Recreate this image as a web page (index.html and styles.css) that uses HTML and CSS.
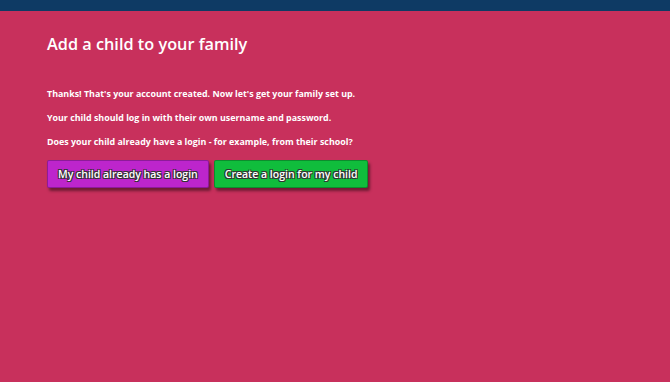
FILE: index.html
```html
<!DOCTYPE html>
<html>
<head>
  <meta charset="UTF-8">
  <title>Add a child to your family</title>
  <link rel="stylesheet" href="styles.css">
</head>
<body>
  <div class="topbar"></div>
  <div class="content">
    <h1>Add a child to your family</h1>
    <p>Thanks! That's your account created. Now let's get your family set up.</p>
    <p>Your child should log in with their own username and password.</p>
    <p>Does your child already have a login - for example, from their school?</p>
    <div class="actions">
      <button class="btn btn-purple">My child already has a login</button>
      <button class="btn btn-green">Create a login for my child</button>
    </div>
  </div>
</body>
</html>
```

FILE: styles.css
```css
html, body {
  height: 100%;
}
body {
  margin: 0;
  background: #c8305c;
  font-family: "Open Sans", sans-serif;
  color: #fff;
}
.topbar {
  height: 11px;
  background: #0e3a64;
}
.content {
  padding: 22px 47px;
}
h1 {
  margin: 0 0 33px;
  font-size: 16.3px;
  font-weight: 600;
  line-height: 22px;
}
p {
  margin: 0 0 12px;
  font-size: 8.9px;
  font-weight: 700;
  line-height: 12px;
}
.actions {
  display: flex;
  gap: 5px;
  margin-top: 7px;
}
.btn {
  height: 28px;
  padding: 0 10px;
  border: 1px solid rgba(0, 0, 0, 0.25);
  border-radius: 2px;
  font-family: "Open Sans", sans-serif;
  font-size: 10.5px;
  font-weight: 600;
  color: #fff;
  text-shadow: -1px -1px 0 #333, 1px -1px 0 #333, -1px 1px 0 #333, 1px 1px 0 #333;
  box-shadow: 2px 3px 3px rgba(0, 0, 0, 0.45);
  cursor: pointer;
}
.btn-purple {
  background: #bd25cc;
}
.btn-green {
  background: #10bd3c;
}
```
